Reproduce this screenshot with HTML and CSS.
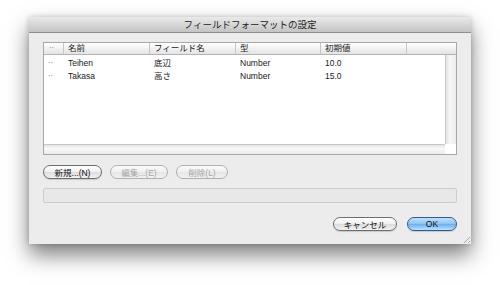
FILE: index.html
```html
<!doctype html>
<html lang="ja">
    <head>
        <meta charset="UTF-8" />
        <title>フィールドフォーマットの設定</title>
        <link rel="stylesheet" href="styles.css">
    </head>
    <body>
        <div class="window">
            <div class="titlebar">フィールドフォーマットの設定</div>
            <div class="content">
                <div class="list">
                    <div class="list-head">
                        <div class="cell dots">··</div>
                        <div class="cell">名前</div>
                        <div class="cell">フィールド名</div>
                        <div class="cell">型</div>
                        <div class="cell">初期値</div>
                        <div class="cell"></div>
                    </div>
                    <div class="list-main">
                        <div class="rows">
                            <div class="row">
                                <div class="cell dots">··</div>
                                <div class="cell">Teihen</div>
                                <div class="cell">底辺</div>
                                <div class="cell">Number</div>
                                <div class="cell">10.0</div>
                            </div>
                            <div class="row">
                                <div class="cell dots">··</div>
                                <div class="cell">Takasa</div>
                                <div class="cell">高さ</div>
                                <div class="cell">Number</div>
                                <div class="cell">15.0</div>
                            </div>
                        </div>
                        <div class="vscroll"></div>
                        <div class="hscroll"></div>
                        <div class="corner"></div>
                    </div>
                </div>

                <div class="actions">
                    <button class="btn">新規...(N)</button>
                    <button class="btn" disabled>編集...(E)</button>
                    <button class="btn" disabled>削除(L)</button>
                </div>

                <div class="status"></div>

                <div class="footer">
                    <button class="btn cancel">キャンセル</button>
                    <button class="btn ok">OK</button>
                </div>
            </div>
            <div class="grip"></div>
        </div>
    </body>
</html>
```

FILE: styles.css
```css
html {
    background: #ffffff;
}

body {
    margin: 0;
    padding: 17px 0 41px 29px;
    min-height: 227px;
    font-family: 'Liberation Sans', 'Noto Sans CJK JP', sans-serif;
    font-size: 8.5px;
    color: #1a1a1a;
}

.window {
    position: relative;
    width: 442px;
    height: 227px;
    background: #ececec;
    display: flex;
    flex-direction: column;
    box-shadow: 0 11px 20px rgba(0, 0, 0, 0.5), 0 0 5px rgba(0, 0, 0, 0.2);
}

.titlebar {
    height: 15px;
    line-height: 15px;
    text-align: center;
    font-size: 9.5px;
    color: #222;
    background: linear-gradient(#e9e9e9, #c4c4c4);
    border-bottom: 1px solid #8e8e8e;
}

.content {
    flex: 1;
    display: flex;
    flex-direction: column;
    padding: 9px 14px 0;
}

/* list */
.list {
    height: 111px;
    border: 1px solid #a8a8a8;
    background: #fff;
    display: flex;
    flex-direction: column;
}

.list-head,
.row {
    display: grid;
    grid-template-columns: 20px 86px 86px 85px 86px 1fr;
}

.list-head {
    height: 11px;
    line-height: 11px;
    background: linear-gradient(#ffffff, #e4e4e4);
    border-bottom: 1px solid #b4b4b4;
}

.list-head .cell {
    border-right: 1px solid #c6c6c6;
    padding-left: 4px;
}

.list-head .cell:last-child {
    border-right: none;
}

.cell.dots {
    padding-left: 5px;
    color: #8a8a8a;
    font-family: 'DejaVu Sans', sans-serif;
    font-size: 8px;
}

.list-main {
    flex: 1;
    display: grid;
    grid-template-columns: 1fr 11px;
    grid-template-rows: 1fr 10px;
}

.rows {
    padding-top: 2px;
}

.row {
    height: 13px;
    line-height: 13px;
    grid-template-columns: 20px 86px 86px 85px 86px;
}

.row .cell {
    padding-left: 4px;
}

.vscroll {
    background: linear-gradient(90deg, #e2e2e2, #f7f7f7 40%, #ececec);
    border-left: 1px solid #c8c8c8;
}

.hscroll {
    background: linear-gradient(#e4e4e4, #f8f8f8 40%, #ececec);
    border-top: 1px solid #c8c8c8;
}

.corner {
    background: #fff;
}

/* buttons */
.actions {
    display: flex;
    gap: 8px;
    margin-top: 10px;
}

.btn {
    height: 14px;
    padding: 0;
    font: inherit;
    color: #111;
    border: 1px solid #6e6e6e;
    border-radius: 8px;
    background: linear-gradient(#ffffff, #f0f0f0 50%, #dcdcdc 51%, #f2f2f2);
    box-shadow: 0 1px 1px rgba(0, 0, 0, 0.15);
}

.actions .btn:nth-child(1) {
    width: 59px;
}

.actions .btn:nth-child(2) {
    width: 58px;
}

.actions .btn:nth-child(3) {
    width: 52px;
}

.btn:disabled {
    color: #a6a6a6;
    border-color: #b0b0b0;
    background: linear-gradient(#fbfbfb, #efefef 50%, #e6e6e6 51%, #f2f2f2);
    box-shadow: none;
}

.status {
    height: 13px;
    margin-top: 9px;
    border: 1px solid #cccccc;
    border-radius: 2px;
    background: #e8e8e8;
}

.footer {
    display: flex;
    justify-content: flex-end;
    gap: 10px;
    margin-top: 14px;
}

.cancel {
    width: 64px;
}

.ok {
    width: 50px;
    border-color: #35598f;
    background: linear-gradient(#bfe0fb, #8ec4f1 50%, #6aaeea 51%, #b8e2ff);
}

.grip {
    position: absolute;
    right: 1px;
    bottom: 1px;
    width: 9px;
    height: 9px;
    background: repeating-linear-gradient(135deg, transparent 0 2px, #a8a8a8 2px 3px);
    clip-path: polygon(100% 0, 100% 100%, 0 100%);
}
```
